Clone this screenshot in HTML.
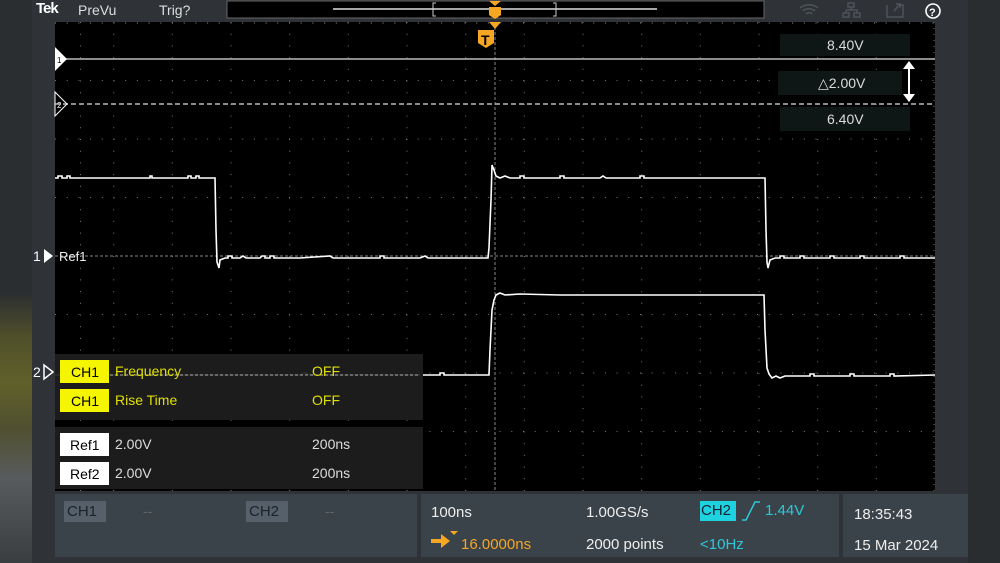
<!DOCTYPE html>
<html><head><meta charset="utf-8"><style>
body{margin:0;width:1000px;height:563px;overflow:hidden;background:#26292d;font-family:"Liberation Sans",sans-serif;}
.t{position:absolute;white-space:nowrap;font-size:14px;}
</style></head><body>
<div style="position:absolute;left:0;top:0;width:32px;height:563px;background:linear-gradient(180deg,#2b2e31 0%,#2b2e31 52%,#50502a 60%,#60602a 68%,#505030 76%,#585b5d 85%,#3a3d40 100%)"></div>
<div style="position:absolute;left:32px;top:0;width:936px;height:563px;background:#2f3337"></div>
<div style="position:absolute;left:968px;top:0;width:32px;height:563px;background:#2a2d30"></div>
<svg style="position:absolute;left:0;top:0" width="1000" height="563">
<rect x="55" y="22" width="880" height="469" fill="#000"/>
<g stroke="#777" stroke-width="1">
<g stroke-dasharray="1 10.7">
<line x1="113.7" y1="22" x2="113.7" y2="491"/><line x1="172.3" y1="22" x2="172.3" y2="491"/><line x1="231" y1="22" x2="231" y2="491"/><line x1="289.7" y1="22" x2="289.7" y2="491"/><line x1="348.3" y1="22" x2="348.3" y2="491"/><line x1="407" y1="22" x2="407" y2="491"/><line x1="465.7" y1="22" x2="465.7" y2="491"/><line x1="524.3" y1="22" x2="524.3" y2="491"/><line x1="583" y1="22" x2="583" y2="491"/><line x1="641.7" y1="22" x2="641.7" y2="491"/><line x1="700.3" y1="22" x2="700.3" y2="491"/><line x1="759" y1="22" x2="759" y2="491"/><line x1="817.7" y1="22" x2="817.7" y2="491"/><line x1="876.3" y1="22" x2="876.3" y2="491"/>
<line x1="80.5" y1="22" x2="80.5" y2="491"/>
</g>
<g stroke-dasharray="1 10.7">
<line x1="55" y1="80.5" x2="935" y2="80.5"/><line x1="55" y1="139" x2="935" y2="139"/><line x1="55" y1="197.5" x2="935" y2="197.5"/><line x1="55" y1="314.5" x2="935" y2="314.5"/><line x1="55" y1="373" x2="935" y2="373"/><line x1="55" y1="431.5" x2="935" y2="431.5"/>
</g>
<line x1="495" y1="22" x2="495" y2="491" stroke="#888" stroke-dasharray="3 2"/>
<line x1="55" y1="256" x2="935" y2="256" stroke="#888" stroke-dasharray="3 2"/>
<line x1="55" y1="23" x2="935" y2="23" stroke-dasharray="1 10.7" stroke="#999"/>
<line x1="934" y1="22" x2="934" y2="491" stroke-dasharray="1 5"/>
</g>
<line x1="55" y1="59" x2="935" y2="59" stroke="#bbb" stroke-width="1.5"/>
<line x1="55" y1="104" x2="935" y2="104" stroke="#bbb" stroke-width="1.5" stroke-dasharray="5 3"/>
<polygon points="55,47 67,59 55,71" fill="#fff"/><text x="57" y="63" font-size="8" fill="#000">1</text>
<polygon points="55,92 67,104 55,116" fill="none" stroke="#fff"/><text x="57" y="108" font-size="8" fill="#fff">2</text>
<g fill="none" stroke="#fff" stroke-width="1.6">
<polyline points="55,178 58,178 58,176 62,176 62,178 67,178 67,176 70,176 70,178 150,178 150,176 152,176 152,178 188,178 188,176 191,176 191,178 196,178 196,176 199,176 199,178 215,178 216,230 217,262 219,268 220,260 225,258 228,258 228,256 232,256 232,258 240,258 243,256 246,258 260,258 262,256 265,256 265,258 270,258 270,256 274,256 274,258 300,258 330,256 333,258 380,258 380,256 384,256 384,258 420,258 425,256 428,258 488,258 489,248 491,200 492,165 494,170 496,176 500,178 505,176 510,178 520,178 520,176 524,176 524,178 560,178 560,176 564,176 564,178 600,178 603,176 606,178 640,178 640,176 644,176 644,178 700,178 765,178 766,230 767,262 768,268 770,260 775,258 780,258 780,256 784,256 784,258 800,258 800,256 804,256 804,258 830,258 830,256 834,256 834,258 860,258 860,256 864,256 864,258 900,258 900,256 904,256 904,258 935,258"/>
<polyline points="55,375 300,375 305,373 310,375 420,375"/>
<polyline points="423,375 440,375 440,373 444,373 444,375 489,375 490,350 492,310 494,300 496,295 500,293 505,295 520,294 560,295 764,295 765,330 767,368 769,374 772,378 776,376 780,378 785,376 800,376 810,376 810,374 814,374 814,376 850,376 850,374 854,374 854,376 890,376 890,374 894,374 894,376 935,375"/>
</g>
<polygon points="489,22 501,22 495,29" fill="#f5a623"/>
<path d="M478,30h16v13l-8,5l-8,-5z" fill="#f5a623"/><text x="481" y="45" font-size="14" font-weight="bold" fill="#000">T</text>
<rect x="227" y="1" width="537" height="17" fill="#000" stroke="#666"/>
<line x1="333" y1="9" x2="657" y2="9" stroke="#ddd" stroke-width="1.5"/>
<path d="M436,3h-3v13h3M553,3h3v13h-3" stroke="#ccc" fill="none"/>
<polygon points="489,1 501,1 495,6" fill="#f5a623"/>
<path d="M489,7h12v8l-6,4l-6,-4z" fill="#f5a623"/>
<g stroke="#4e5358" fill="none" stroke-width="1.5">
<path d="M800,8a14,14 0 0 1 18,0M803,11a9,9 0 0 1 12,0M806,14a4,4 0 0 1 6,0"/>
<rect x="848" y="3" width="6" height="4"/><rect x="843" y="13" width="6" height="4"/><rect x="854" y="13" width="6" height="4"/><path d="M851,7v3M846,10h11v3M846,10v3"/>
<path d="M887,5v12h16v-12h-4M894,11l6,-7M896,4h4v4"/>
</g>
<circle cx="933" cy="11" r="7" fill="none" stroke="#fff" stroke-width="1.6"/><text x="929" y="16" font-size="11" font-weight="bold" fill="#fff">?</text>
<path d="M909,63v38" stroke="#fff" stroke-width="2"/><polygon points="903,69 909,61 915,69" fill="#fff"/><polygon points="903,94 909,102 915,94" fill="#fff"/>
<polygon points="44,249 53,256 44,263" fill="#fff"/>
<polygon points="44,365 53,372 44,379" fill="none" stroke="#fff" stroke-width="1.5"/>
</svg>
<div style="position:absolute;left:780px;top:34px;width:130px;height:22px;background:#0f1616"></div>
<div class="t" style="left:827px;top:37px;color:#ddd">8.40V</div>
<div style="position:absolute;left:778px;top:71px;width:124px;height:24px;background:#0f1616"></div>
<div class="t" style="left:818px;top:75px;color:#ddd">△2.00V</div>
<div style="position:absolute;left:780px;top:107px;width:130px;height:24px;background:#0f1616"></div>
<div class="t" style="left:827px;top:111px;color:#ddd">6.40V</div>
<div class="t" style="left:36px;top:0px;color:#fff;font-weight:bold;font-size:15px;letter-spacing:-1px">Tek</div>
<div class="t" style="left:78px;top:2px;color:#ddd">PreVu</div>
<div class="t" style="left:159px;top:2px;color:#ddd">Trig?</div>
<div class="t" style="left:33px;top:248px;color:#fff">1</div>
<div class="t" style="left:59px;top:249px;color:#eee;font-size:13px">Ref1</div>
<div class="t" style="left:33px;top:364px;color:#fff">2</div>
<div style="position:absolute;left:55px;top:354px;width:368px;height:66px;background:rgba(30,30,30,0.93)"></div>
<div style="position:absolute;left:55px;top:427px;width:368px;height:62px;background:rgba(30,30,30,0.93)"></div>
<svg style="position:absolute;left:0;top:0" width="1000" height="563"><line x1="110" y1="375" x2="420" y2="375" stroke="#aaa" stroke-dasharray="3 2"/></svg>
<div style="position:absolute;left:60px;top:360px;width:49px;height:23px;background:#f5f500"></div>
<div class="t" style="left:71px;top:364px;color:#000">CH1</div>
<div class="t" style="left:115px;top:363px;color:#e0e000">Frequency</div>
<div class="t" style="left:312px;top:363px;color:#e0e000">OFF</div>
<div style="position:absolute;left:60px;top:389px;width:49px;height:23px;background:#f5f500"></div>
<div class="t" style="left:71px;top:393px;color:#000">CH1</div>
<div class="t" style="left:115px;top:392px;color:#e0e000">Rise Time</div>
<div class="t" style="left:312px;top:392px;color:#e0e000">OFF</div>
<div style="position:absolute;left:60px;top:433px;width:49px;height:23px;background:#fff"></div>
<div class="t" style="left:70px;top:437px;color:#000">Ref1</div>
<div class="t" style="left:115px;top:436px;color:#ddd">2.00V</div>
<div class="t" style="left:312px;top:436px;color:#ddd">200ns</div>
<div style="position:absolute;left:60px;top:462px;width:49px;height:23px;background:#fff"></div>
<div class="t" style="left:70px;top:466px;color:#000">Ref2</div>
<div class="t" style="left:115px;top:465px;color:#ddd">2.00V</div>
<div class="t" style="left:312px;top:465px;color:#ddd">200ns</div>
<div style="position:absolute;left:55px;top:494px;width:362px;height:63px;background:#3a4349"></div>
<div style="position:absolute;left:421px;top:494px;width:418px;height:63px;background:#3a4349"></div>
<div style="position:absolute;left:843px;top:494px;width:125px;height:63px;background:#3a4349"></div>
<div style="position:absolute;left:64px;top:501px;width:42px;height:21px;background:#56606a"></div>
<div class="t" style="left:67px;top:503px;color:#1b2228;font-size:15px">CH1</div>
<div class="t" style="left:143px;top:503px;color:#666">--</div>
<div style="position:absolute;left:246px;top:501px;width:42px;height:21px;background:#56606a"></div>
<div class="t" style="left:249px;top:503px;color:#1b2228;font-size:15px">CH2</div>
<div class="t" style="left:325px;top:503px;color:#666">--</div>
<div class="t" style="left:431px;top:504px;color:#eee;font-size:15px">100ns</div>
<div class="t" style="left:586px;top:504px;color:#eee;font-size:15px">1.00GS/s</div>
<div style="position:absolute;left:700px;top:501px;width:36px;height:20px;background:#1ed2e0"></div>
<div class="t" style="left:701px;top:502px;color:#123;font-size:15px">CH2</div>
<svg style="position:absolute;left:740px;top:500px" width="22" height="22"><path d="M2,20h4l9,-18h5" stroke="#2cc8d8" stroke-width="1.5" fill="none"/></svg>
<div class="t" style="left:765px;top:502px;color:#2cc8d8;font-size:15px">1.44V</div>
<div class="t" style="left:854px;top:506px;color:#eee;font-size:15px">18:35:43</div>
<svg style="position:absolute;left:430px;top:530px" width="30" height="22"><path d="M1,9h10v-5l9,7l-9,7v-5h-10z" fill="#f5a623"/><polygon points="20,1 28,1 24,5" fill="#f5a623"/></svg>
<div class="t" style="left:461px;top:536px;color:#f5a623;font-size:15px">16.0000ns</div>
<div class="t" style="left:586px;top:536px;color:#eee;font-size:15px">2000 points</div>
<div class="t" style="left:700px;top:536px;color:#2cc8d8;font-size:15px">&lt;10Hz</div>
<div class="t" style="left:854px;top:537px;color:#eee;font-size:15px">15 Mar 2024</div>
</body></html>
